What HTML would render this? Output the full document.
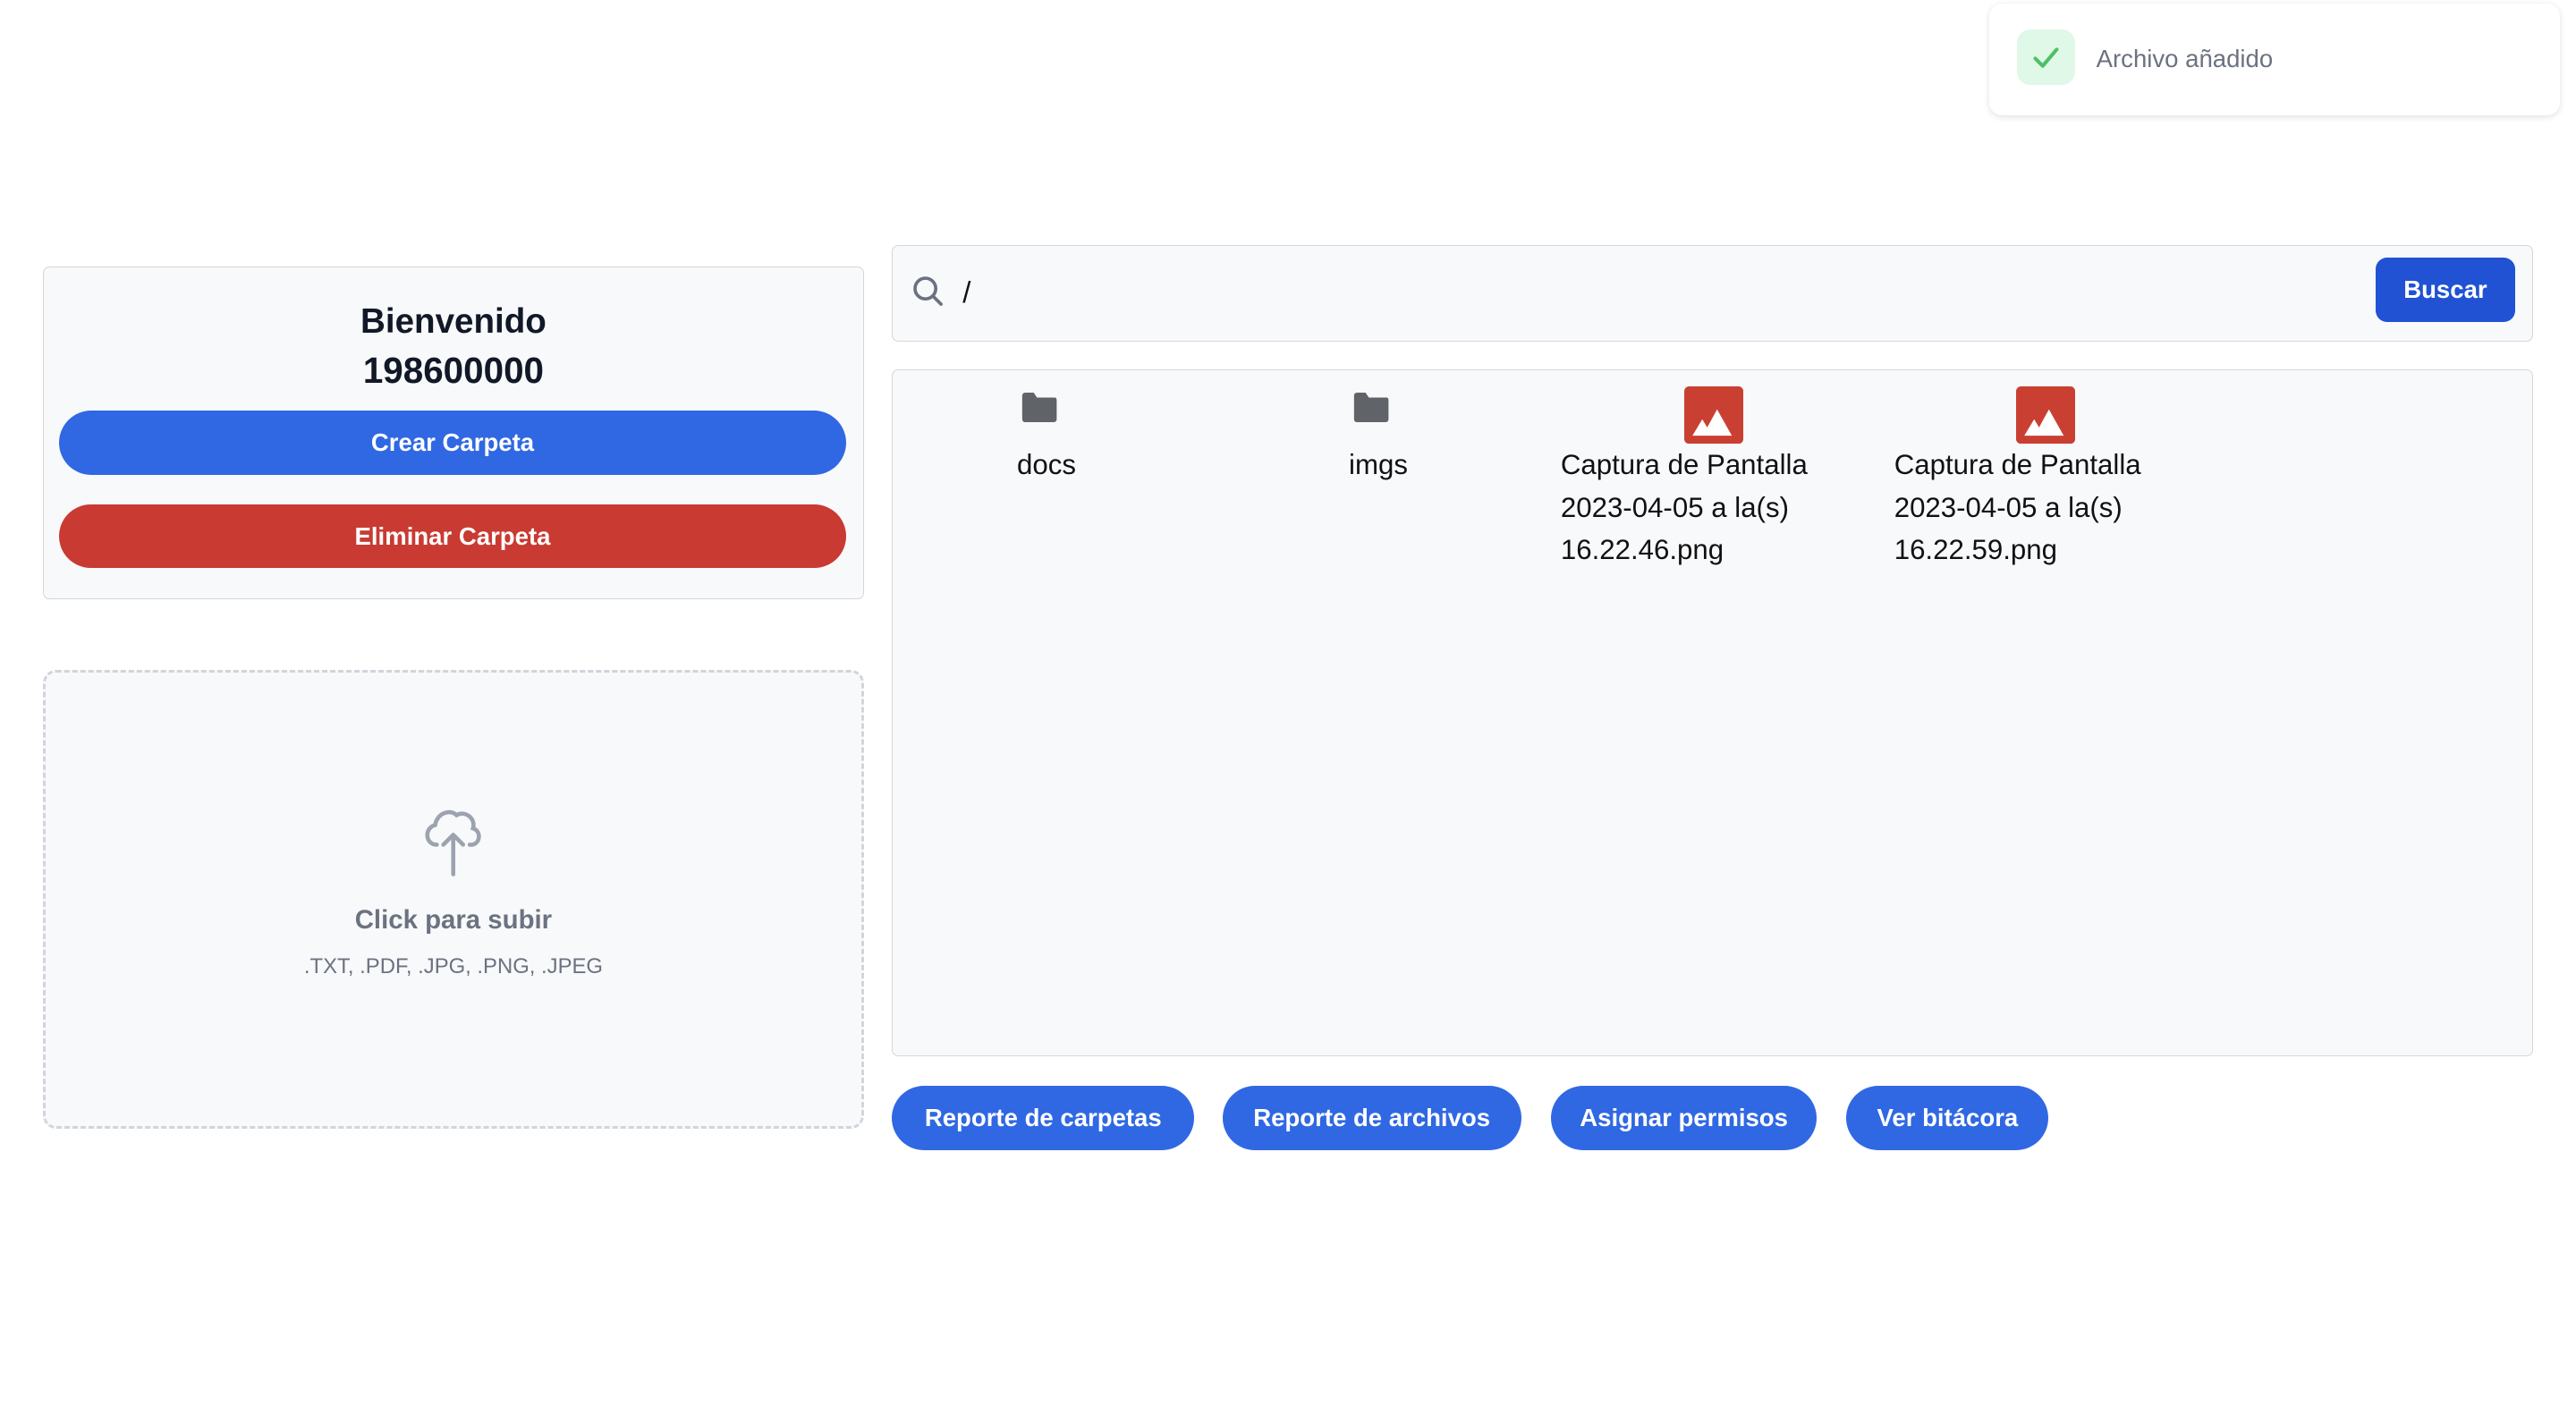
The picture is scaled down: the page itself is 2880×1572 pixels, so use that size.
<!DOCTYPE html>
<html><head><meta charset="utf-8">
<style>
html,body{margin:0;padding:0;background:#fff;overflow:hidden;}
body{width:2880px;height:1572px;}
#w{zoom:1.8367;width:1568px;height:856px;position:relative;font-family:"Liberation Sans",sans-serif;}
.abs{position:absolute;}
.card{position:absolute;background:#f8f9fb;border:1px solid #d4d6da;border-radius:4px;box-sizing:border-box;}
.btn{position:absolute;color:#fff;font-weight:bold;font-size:15px;display:flex;align-items:center;justify-content:center;border-radius:20px;}
.blue{background:#3068e3;}
.item{position:absolute;width:170px;text-align:center;font-size:17px;line-height:26px;color:#111;}
.item span{display:inline-block;text-align:left;}
</style></head><body><div id="w">
<div class="abs" style="left:1211px;top:2px;width:347px;height:68px;background:#fff;border-radius:8px;box-shadow:0 1px 4px rgba(0,0,0,.12);"></div>
<div class="abs" style="left:1228px;top:18px;width:35px;height:34px;background:#dff8e7;border-radius:8px;"></div>
<svg class="abs" style="left:1236px;top:26px" width="19" height="18" viewBox="0 0 19 18"><path d="M3 9.5 L7.5 14 L16 4" fill="none" stroke="#4fbf66" stroke-width="2.2" stroke-linecap="round" stroke-linejoin="round"/></svg>
<div class="abs" style="left:1276px;top:27px;font-size:15px;color:#6b7280;">Archivo añadido</div>

<div class="card" style="left:26px;top:162px;width:500px;height:203px;"></div>
<div class="abs" style="left:26px;width:500px;top:183px;text-align:center;font-size:21px;font-weight:bold;color:#111827;line-height:26px;">Bienvenido</div>
<div class="abs" style="left:26px;width:500px;top:212px;text-align:center;font-size:22px;font-weight:bold;color:#111827;line-height:28px;">198600000</div>
<div class="btn blue" style="left:36px;top:250px;width:479px;height:39px;">Crear Carpeta</div>
<div class="btn" style="left:36px;top:307px;width:479px;height:39px;background:#c93a32;">Eliminar Carpeta</div>

<div class="abs" style="left:26px;top:408px;width:500px;height:279px;box-sizing:border-box;border:2px dashed #d1d5db;border-radius:8px;background:#f8f9fb;"></div>
<svg class="abs" style="left:256px;top:492px" width="40" height="44" viewBox="0 0 40 44"><path d="M10 22 C3 22 2 12 9 10 C10 3 18 0 22 4 C27 1 34 6 32 12 C38 14 36 23 30 22" fill="none" stroke="#9ca3af" stroke-width="2.5" stroke-linecap="round"/><path d="M20 40 V16 M14 22 L20 16 L26 22" fill="none" stroke="#9ca3af" stroke-width="2.5" stroke-linecap="round" stroke-linejoin="round"/></svg>
<div class="abs" style="left:26px;width:500px;top:551px;text-align:center;font-size:16px;font-weight:bold;color:#6b7280;">Click para subir</div>
<div class="abs" style="left:26px;width:500px;top:581px;text-align:center;font-size:13px;color:#6b7280;">.TXT, .PDF, .JPG, .PNG, .JPEG</div>

<div class="card" style="left:543px;top:149px;width:999px;height:59px;"></div>
<svg class="abs" style="left:555px;top:167px" width="20" height="20" viewBox="0 0 20 20"><circle cx="8.5" cy="8.5" r="6.3" fill="none" stroke="#6b7280" stroke-width="2"/><path d="M13 13 L18 18" stroke="#6b7280" stroke-width="2" stroke-linecap="round"/></svg>
<div class="abs" style="left:586px;top:168px;font-size:18px;color:#111;">/</div>
<div class="btn" style="left:1446px;top:157px;width:85px;height:39px;border-radius:7px;background:#2152d4;">Buscar</div>

<div class="card" style="left:543px;top:225px;width:999px;height:418px;"></div>
<svg class="abs" style="left:621px;top:239px" width="23" height="18" viewBox="0 0 23 18"><path d="M1 2 Q1 0 3 0 H8 L10 3 H21 Q22 3 22 5 V16 Q22 18 20 18 H3 Q1 18 1 16 Z" fill="#606368"/></svg>
<div class="item" style="left:552px;top:270px;">docs</div>
<svg class="abs" style="left:823px;top:239px" width="23" height="18" viewBox="0 0 23 18"><path d="M1 2 Q1 0 3 0 H8 L10 3 H21 Q22 3 22 5 V16 Q22 18 20 18 H3 Q1 18 1 16 Z" fill="#606368"/></svg>
<div class="item" style="left:754px;top:270px;">imgs</div>
<svg class="abs" style="left:1025px;top:235px" width="36" height="35" viewBox="0 0 36 35"><rect width="36" height="35" rx="3" fill="#c94032"/><path d="M5 30 L11 20 L14 25 L20 14 L29 30 Z" fill="#fff"/></svg>
<div class="abs" style="left:950px;top:270px;font-size:17px;line-height:26px;color:#111;width:180px;">Captura de Pantalla<br>2023-04-05 a la(s)<br>16.22.46.png</div>
<svg class="abs" style="left:1227px;top:235px" width="36" height="35" viewBox="0 0 36 35"><rect width="36" height="35" rx="3" fill="#c94032"/><path d="M5 30 L11 20 L14 25 L20 14 L29 30 Z" fill="#fff"/></svg>
<div class="abs" style="left:1153px;top:270px;font-size:17px;line-height:26px;color:#111;width:180px;">Captura de Pantalla<br>2023-04-05 a la(s)<br>16.22.59.png</div>

<div class="btn blue" style="left:543px;top:661px;width:184px;height:39px;">Reporte de carpetas</div>
<div class="btn blue" style="left:744px;top:661px;width:182px;height:39px;">Reporte de archivos</div>
<div class="btn blue" style="left:944px;top:661px;width:162px;height:39px;">Asignar permisos</div>
<div class="btn blue" style="left:1124px;top:661px;width:123px;height:39px;">Ver bitácora</div>
</div></body></html>
